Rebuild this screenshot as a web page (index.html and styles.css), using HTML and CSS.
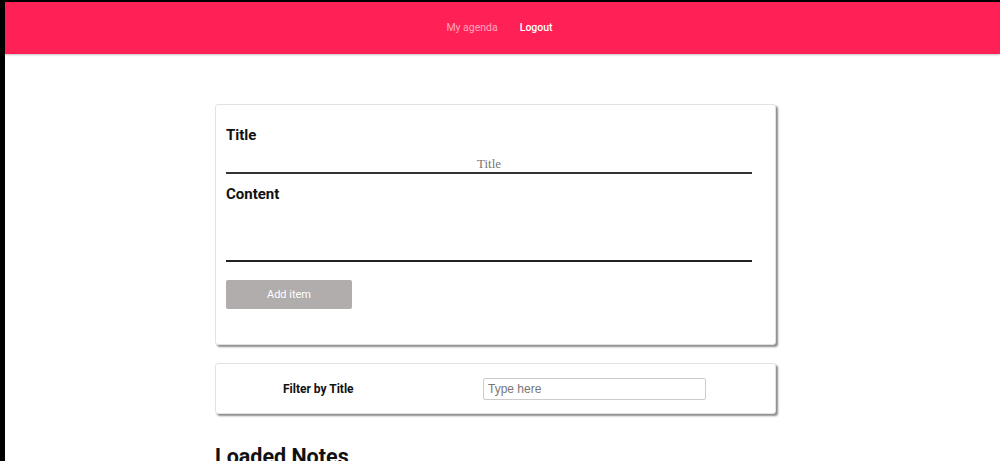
FILE: index.html
```html
<!DOCTYPE html>
<html lang="en">
<head>
<meta charset="utf-8">
<title>My agenda</title>
<link rel="stylesheet" href="styles.css">
</head>
<body>
<header class="topbar">
  <nav class="nav">
    <a class="nav-link muted" href="#">My agenda</a>
    <a class="nav-link active" href="#">Logout</a>
  </nav>
</header>
<main class="main">
  <form class="card add-card">
    <label class="field-label" for="title">Title</label>
    <input class="title-input" id="title" type="text" placeholder="Title">
    <label class="field-label content-label" for="content">Content</label>
    <textarea class="content-input" id="content"></textarea>
    <button class="add-btn" type="button">Add item</button>
  </form>
  <section class="card filter-card">
    <span class="filter-label">Filter by Title</span>
    <input class="filter-input" type="text" placeholder="Type here">
  </section>
  <h2 class="notes-heading">Loaded Notes</h2>
</main>
</body>
</html>
```

FILE: styles.css
```css
html {
  background: #000;
}
body {
  margin: 2px 0 0 5px;
  background: #fff;
  min-height: 459px;
  font-family: Roboto, "Liberation Sans", sans-serif;
  overflow: hidden;
}
.topbar {
  height: 52px;
  background: #ff2056;
  display: flex;
  justify-content: center;
  align-items: center;
  padding-right: 6px;
  box-shadow: 0 1px 2px rgba(0, 0, 0, 0.25);
}
.nav {
  display: flex;
  gap: 22px;
  margin-top: -2px;
}
.nav-link {
  font-size: 10.5px;
  text-decoration: none;
}
.nav-link.muted {
  color: rgba(255, 255, 255, 0.6);
}
.nav-link.active {
  color: #fff;
  font-weight: 500;
}
.main {
  padding-left: 210px;
  width: 560px;
}
.card {
  box-sizing: border-box;
  width: 561px;
  background: #fff;
  border: 1px solid #e2e2e2;
  border-radius: 3px;
  box-shadow: 2px 2px 2px rgba(0, 0, 0, 0.45);
}
.add-card {
  margin-top: 50px;
  height: 241px;
  padding: 21px 23px 0 10px;
  display: flex;
  flex-direction: column;
  align-items: flex-start;
}
.field-label {
  font-size: 15px;
  font-weight: 700;
  line-height: 18px;
  color: #111;
}
.title-input {
  box-sizing: border-box;
  width: 100%;
  height: 21px;
  margin-top: 9px;
  border: none;
  border-bottom: 2px solid #333;
  text-align: center;
  font-family: "Liberation Serif", serif;
  font-size: 13px;
  padding: 2px 0 0;
  outline: none;
  background: transparent;
}
.title-input::placeholder {
  color: #777;
}
.content-label {
  margin-top: 11px;
}
.content-input {
  box-sizing: border-box;
  width: 100%;
  height: 59px;
  margin-top: 0;
  border: none;
  border-bottom: 2px solid #222;
  resize: none;
  outline: none;
  background: transparent;
}
.add-btn {
  margin-top: 18px;
  width: 126px;
  height: 29px;
  border: none;
  border-radius: 2px;
  background: #b1adad;
  color: #fff;
  font-family: Roboto, "Liberation Sans", sans-serif;
  font-size: 11px;
}
.filter-card {
  margin-top: 18px;
  height: 51px;
  display: flex;
  align-items: center;
  padding-left: 67px;
}
.filter-label {
  font-size: 12px;
  font-weight: 700;
  color: #111;
  width: 200px;
}
.filter-input {
  box-sizing: border-box;
  width: 223px;
  height: 22px;
  border: 1px solid #ccc;
  border-radius: 2px;
  font-family: "Liberation Sans", Arial, sans-serif;
  font-size: 12px;
  padding: 0 4px;
  outline: none;
}
.filter-input::placeholder {
  color: #777;
}
.notes-heading {
  margin: 30px 0 0;
  font-size: 21.5px;
  font-weight: 700;
  line-height: 26px;
  color: #111;
}
```
